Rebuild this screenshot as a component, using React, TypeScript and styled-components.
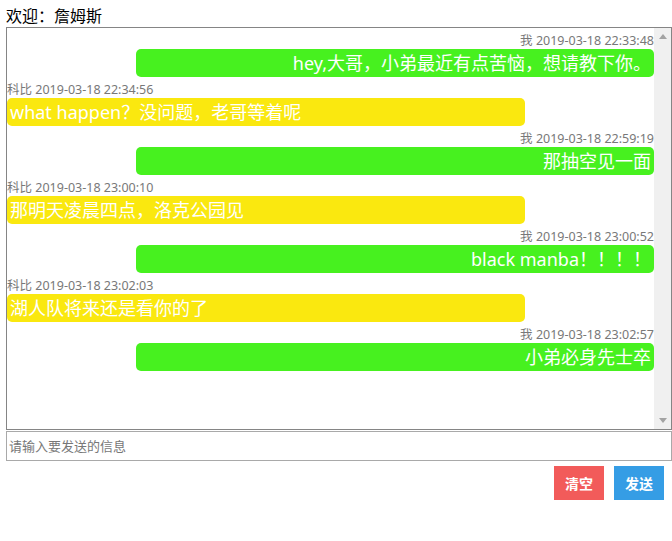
import React from 'react';
import styled, { createGlobalStyle } from 'styled-components';

const GlobalStyle = createGlobalStyle`
  html, body {
    margin: 0;
    padding: 0;
    background: #fff;
  }
  body {
    font-family: "Microsoft YaHei", "Noto Sans", "Noto Sans CJK SC", sans-serif;
  }
`;

const Page = styled('div')`
  padding: 6px 0 0 6px;
  width: 672px;
  box-sizing: border-box;
`;

const Welcome = styled('div')`
  font-size: 16px;
  line-height: 21px;
  color: #000;
`;

const ChatBox = styled('div')`
  box-sizing: border-box;
  display: flex;
  width: 100%;
  height: 403px;
  border: 1px solid #858585;
`;

const MessageList = styled('div')`
  flex: 1;
  min-width: 0;
  overflow: hidden;
`;

const ScrollTrack = styled('div')`
  width: 17px;
  flex: none;
  display: flex;
  flex-direction: column;
  justify-content: space-between;
  background: #f0f0f0;
`;

const ScrollArrow = styled('div')`
  height: 17px;
  display: flex;
  align-items: center;
  justify-content: center;
`;

const Message = styled('div')<{ $mine: boolean }>`
  display: flex;
  flex-direction: column;
  align-items: ${(p) => (p.$mine ? 'flex-end' : 'flex-start')};
`;

const Meta = styled('div')`
  padding-top: 5px;
  font-size: 12.5px;
  line-height: 16px;
  color: #787878;
  white-space: nowrap;
`;

const Bubble = styled('div')<{ $mine: boolean }>`
  box-sizing: border-box;
  width: 80%;
  height: 28px;
  padding: 0 3px;
  border-radius: 5px;
  font-size: 18px;
  line-height: 28px;
  color: #fff;
  white-space: nowrap;
  text-align: ${(p) => (p.$mine ? 'right' : 'left')};
  background: ${(p) => (p.$mine ? '#47f11f' : '#fae80f')};
`;

const Input = styled('input')`
  display: block;
  box-sizing: border-box;
  width: 100%;
  height: 30px;
  margin: 1px 0 0;
  padding: 0 2px;
  border: 1px solid #a9a9a9;
  outline: none;
  font-family: inherit;
  font-size: 13px;
  color: #333;

  &::placeholder {
    color: #777;
  }
`;

const Actions = styled('div')`
  display: flex;
  justify-content: flex-end;
  gap: 10px;
  padding: 5px 8px 0 0;
`;

const Button = styled('button')<{ $color: string }>`
  width: 50px;
  height: 34px;
  border: 0;
  padding: 0;
  background: ${(p) => p.$color};
  color: #fff;
  font-family: inherit;
  font-size: 14px;
  font-weight: bold;
  cursor: pointer;
`;

type ChatMessage = {
  mine: boolean;
  name: string;
  time: string;
  text: string;
};

const messages: ChatMessage[] = [
  { mine: true, name: '我', time: '2019-03-18 22:33:48', text: 'hey,大哥，小弟最近有点苦恼，想请教下你。' },
  { mine: false, name: '科比', time: '2019-03-18 22:34:56', text: 'what happen？没问题，老哥等着呢' },
  { mine: true, name: '我', time: '2019-03-18 22:59:19', text: '那抽空见一面' },
  { mine: false, name: '科比', time: '2019-03-18 23:00:10', text: '那明天凌晨四点，洛克公园见' },
  { mine: true, name: '我', time: '2019-03-18 23:00:52', text: 'black manba！！！！' },
  { mine: false, name: '科比', time: '2019-03-18 23:02:03', text: '湖人队将来还是看你的了' },
  { mine: true, name: '我', time: '2019-03-18 23:02:57', text: '小弟必身先士卒' },
];

function Arrow({ up }: { up: boolean }) {
  return (
    <ScrollArrow>
      <svg width="8" height="5" viewBox="0 0 8 5">
        <path d={up ? 'M0 5h8L4 0z' : 'M0 0h8L4 5z'} fill="#a3a3a3" />
      </svg>
    </ScrollArrow>
  );
}

export default function App() {
  return (
    <Page>
      <GlobalStyle />
      <Welcome>欢迎：詹姆斯</Welcome>
      <ChatBox>
        <MessageList>
          {messages.map((m, i) => (
            <Message key={i} $mine={m.mine}>
              <Meta>
                {m.name} {m.time}
              </Meta>
              <Bubble $mine={m.mine}>{m.text}</Bubble>
            </Message>
          ))}
        </MessageList>
        <ScrollTrack>
          <Arrow up />
          <Arrow up={false} />
        </ScrollTrack>
      </ChatBox>
      <Input placeholder="请输入要发送的信息" />
      <Actions>
        <Button $color="#f25b5a">清空</Button>
        <Button $color="#359de5">发送</Button>
      </Actions>
    </Page>
  );
}
